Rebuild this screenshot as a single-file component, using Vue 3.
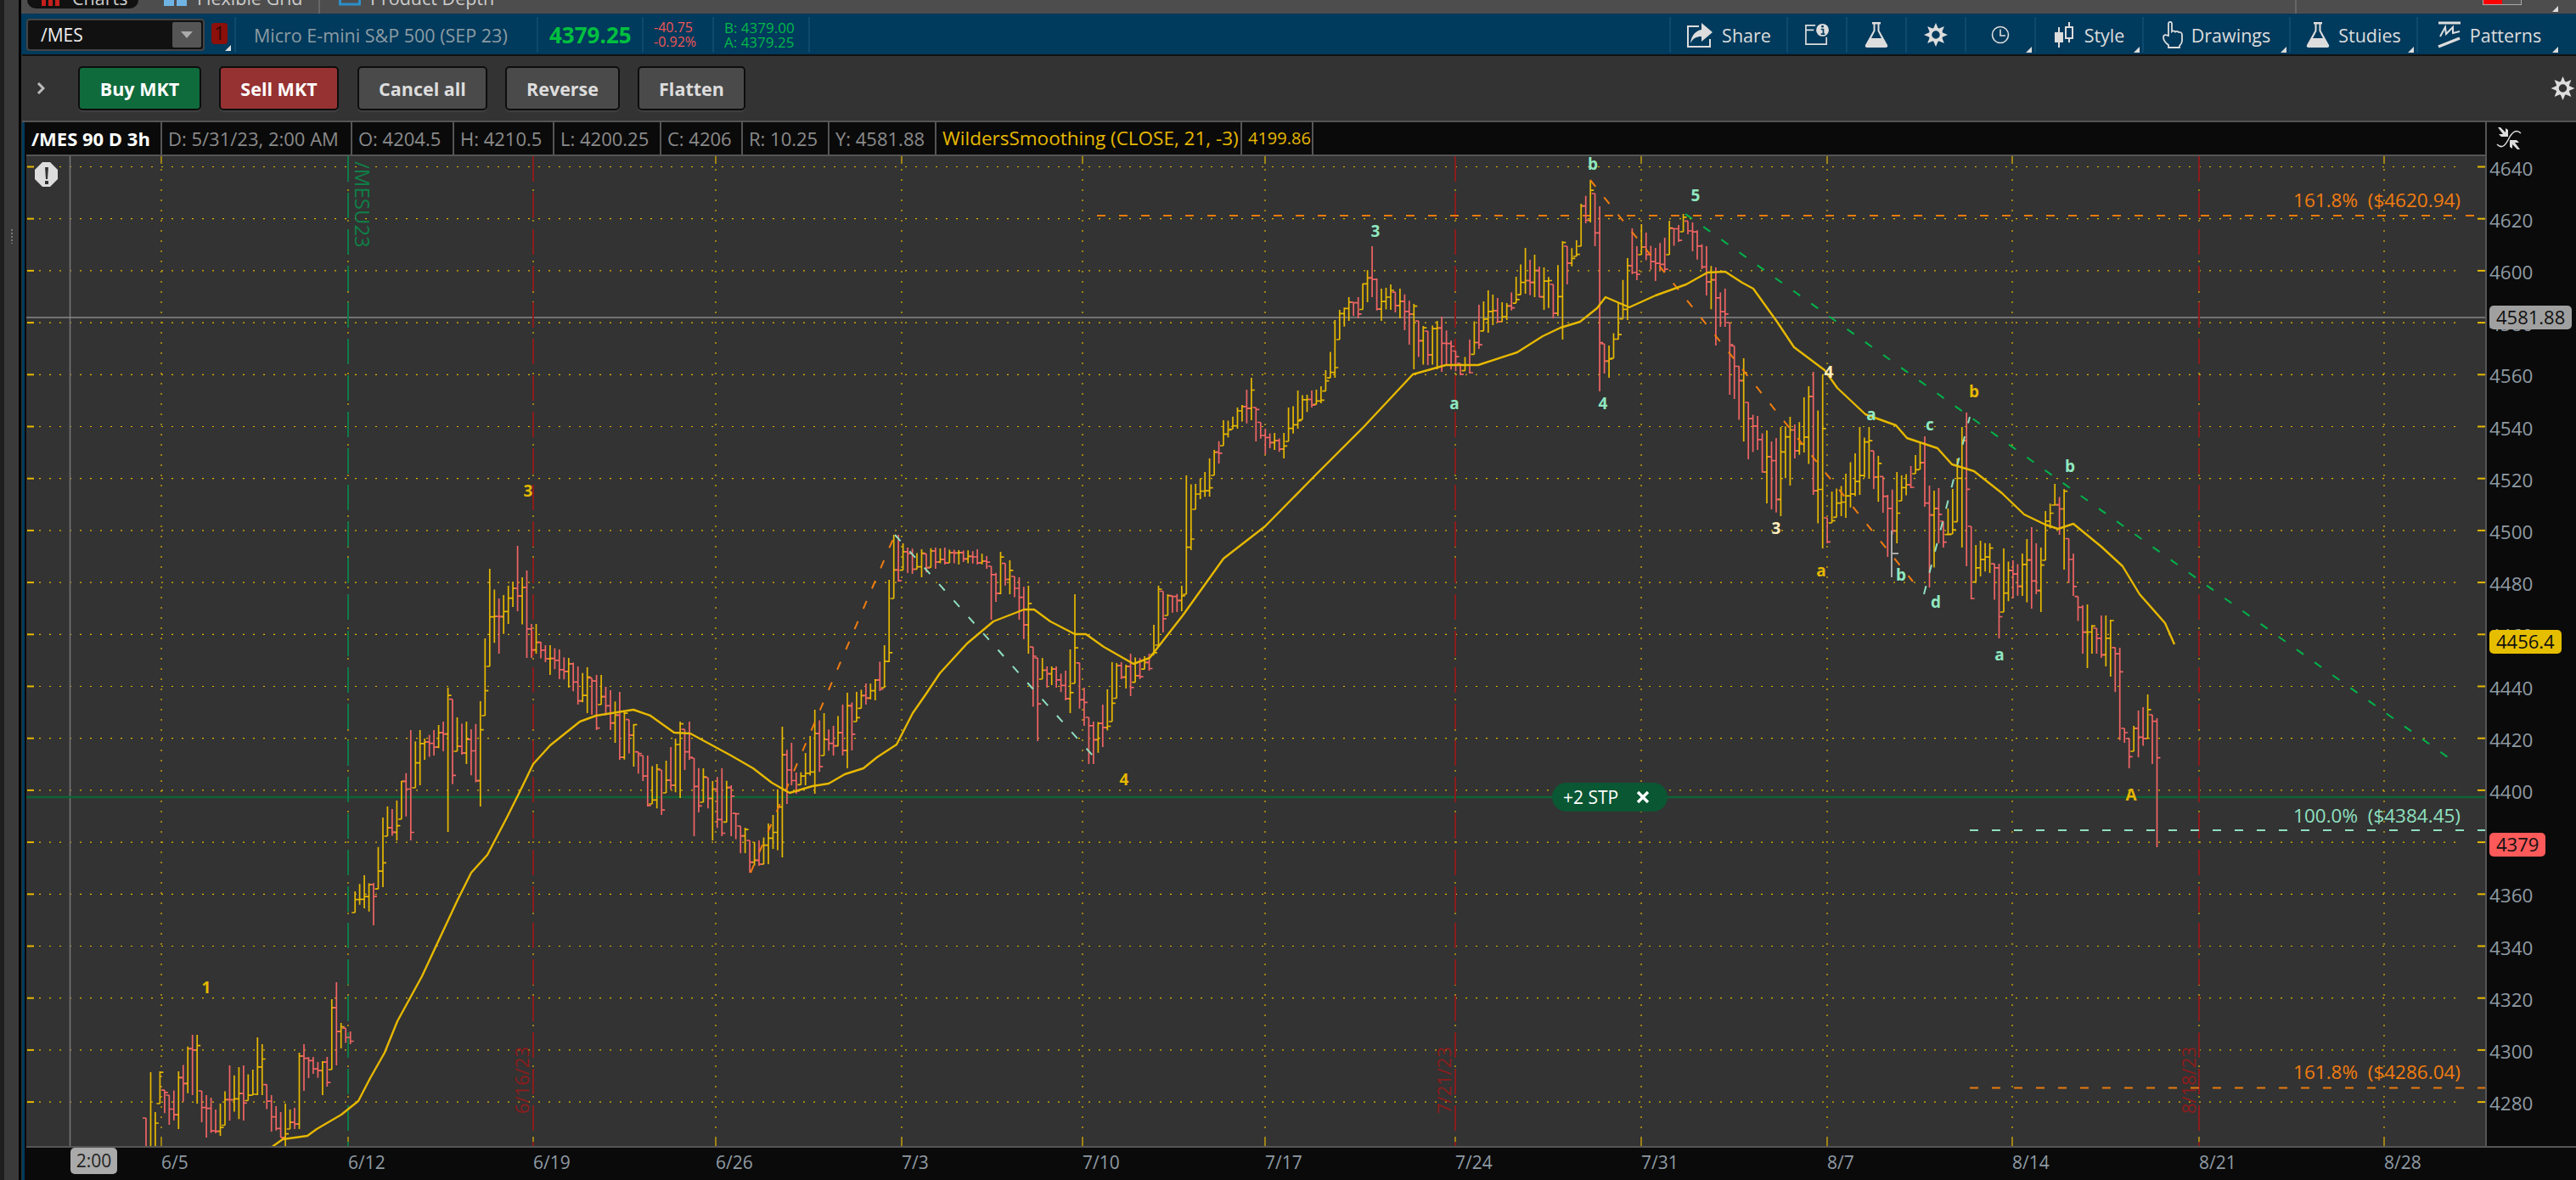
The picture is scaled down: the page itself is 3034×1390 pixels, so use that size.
<template>
  <div class="app">
    <div class="rail">
      <div class="grip"></div>
    </div>
    <div class="main">
      <!-- tab strip, cut off by the top of the shot -->
      <div class="tabs">
        <div class="tab active">
          <svg width="26" height="20" viewBox="0 0 26 20"><path d="M1 20V6h5v14zM9 20V2h5v18zM17 20V6h5v14z" fill="#c4201c" /></svg>
          <span>Charts</span>
        </div>
        <div class="tab">
          <svg width="28" height="20" viewBox="0 0 28 20"><path d="M0 0h12v20H0zM15 0h12v20H15z" fill="#6fb4e4" /></svg>
          <span>Flexible Grid</span>
        </div>
        <div class="tab last-tab">
          <svg width="26" height="20" viewBox="0 0 26 20"><rect x="1.5" y="0" width="23" height="18" fill="none" stroke="#2b8fc9" stroke-width="3" /></svg>
          <span>Product Depth</span>
        </div>
        <div class="tabs-right">
          <div class="swatch"><i></i><b></b></div>
          <span class="corner strip-corner"></span>
        </div>
      </div>

      <!-- quote bar -->
      <div class="quote">
        <div class="symbol">
          <span>/MES</span>
          <div class="drop"><i></i></div>
        </div>
        <div class="badge">1</div>
        <span class="corner sym-corner"></span>
        <div class="cell desc">Micro E-mini S&amp;P 500 (SEP 23)</div>
        <div class="cell last">4379.25</div>
        <div class="cell stack red"><span>-40.75</span><span>-0.92%</span></div>
        <div class="cell stack green"><span>B: 4379.00</span><span>A: 4379.25</span></div>
        <div class="cell spacer"></div>
        <div class="cell tool" style="width: 138px">
          <svg width="32" height="32" viewBox="0 0 32 32"><path d="M15 6H2v24h26v-9" fill="none" stroke="#ddd" stroke-width="2" /><path d="M18 2l13 11-13 11v-6c-6 0-10 2-13 8 1-9 6-15 13-16z" fill="#ddd" /></svg>
          <span>Share</span>
        </div>
        <div class="cell tool" style="width: 70px">
          <svg width="30" height="28" viewBox="0 0 32 30"><path d="M2 9h10M14 3H2v24h26v-9" fill="none" stroke="#ddd" stroke-width="1.800" /><circle cx="23" cy="9" r="8" fill="#ddd" /><path d="M21 8h3v6M21 14h5" fill="none" stroke="#003a5c" stroke-width="1.800" /><circle cx="23" cy="4.500" r="1.500" fill="#003a5c" /></svg>
        </div>
        <div class="cell tool" style="width: 70px">
          <svg width="28" height="32" viewBox="0 0 28 32"><use href="#flask" /></svg>
        </div>
        <div class="cell tool" style="width: 70px">
          <svg width="28" height="28" viewBox="0 0 28 28"><use href="#gear" /></svg>
        </div>
        <div class="cell tool" style="width: 82px">
          <svg width="22" height="22" viewBox="0 0 22 22"><circle cx="11" cy="11" r="9.500" fill="none" stroke="#ddd" stroke-width="1.600" /><path d="M11 4.500V12h6" fill="none" stroke="#ddd" stroke-width="1.600" /></svg>
          <span class="corner"></span>
        </div>
        <div class="cell tool" style="width: 127px">
          <svg width="26" height="30" viewBox="0 0 26 30"><path d="M6 6v24M18 0v24" stroke="#ddd" stroke-width="2" fill="none" /><rect x="1" y="12" width="10" height="12" fill="#ddd" /><rect x="14" y="6" width="8" height="13" fill="#003a5c" stroke="#ddd" stroke-width="2" /></svg>
          <span>Style</span>
          <span class="corner"></span>
        </div>
        <div class="cell tool" style="width: 173px">
          <svg width="24" height="32" viewBox="0 0 24 32"><path d="M7 18V3c0-3 4-3 4 0v9c1-1 3-1 4 .5 1-1 3-1 4 .5 2-.5 4 .5 4 3v7c0 3-2 5-3 6v2H7v-3c-3-2-6-6-6-9 0-3 3-4 6-1.500z" fill="none" stroke="#ddd" stroke-width="1.800" /></svg>
          <span>Drawings</span>
          <span class="corner"></span>
        </div>
        <div class="cell tool" style="width: 150px">
          <svg width="28" height="32" viewBox="0 0 28 32"><use href="#flask" /></svg>
          <span>Studies</span>
          <span class="corner"></span>
        </div>
        <div class="cell tool" style="width: 170px">
          <svg width="28" height="32" viewBox="0 0 28 32"><path d="M1 2h26" stroke="#ddd" stroke-width="3" /><path d="M3 18l6-11 1 8 8-8v7l8-2" fill="none" stroke="#ddd" stroke-width="2" /><path d="M1 30l25-10" stroke="#ddd" stroke-width="3.500" /></svg>
          <span>Patterns</span>
          <span class="corner"></span>
        </div>
      </div>

      <!-- order buttons -->
      <div class="toolbar">
        <svg class="chevron" width="10" height="14" viewBox="0 0 10 14"><path d="M2 1l6 6-6 6" fill="none" stroke="#bbb" stroke-width="3" /></svg>
        <button class="btn buy">Buy MKT</button>
        <button class="btn sell">Sell MKT</button>
        <button class="btn gray cancel">Cancel all</button>
        <button class="btn gray reverse">Reverse</button>
        <button class="btn gray flatten">Flatten</button>
        <svg class="tool-gear" width="29" height="28" viewBox="0 0 28 28"><use href="#gear" /></svg>
      </div>

      <!-- chart -->
      <div class="chart">
        <div class="head">
          <div class="h-cell title">/MES 90 D 3h</div>
          <div v-for="c in headCells" :key="c.text" class="h-cell" :style="{ width: c.w + 'px' }">{{ c.text }}</div>
          <div class="h-cell study wide" style="width: 360px">WildersSmoothing (CLOSE, 21, -3)</div>
          <div class="h-cell study small" style="width: 84px">4199.86</div>
        </div>

        <div class="axis">
          <svg class="auto" width="30" height="30" viewBox="0 0 30 30">
            <path d="M2 2h3l6 6V3l3 2v8H6l-3-3h5zM28 28h-3l-6-6v5l-3-2v-8h8l3 3h-5z" fill="#ddd" />
            <path d="M1 22c6 6 10 1 14-7s9-11 14-6" fill="none" stroke="#ddd" stroke-width="1.500" />
          </svg>
          <span v-for="p in gridPrices" :key="p" class="price" :style="{ top: priceY(p) - 156 + 'px' }">{{ p }}</span>
          <span class="tag tag-gray" style="top: 216px">4581.88</span>
          <span class="tag tag-yellow" style="top: 598px">4456.4</span>
          <span class="tag tag-red" style="top: 837px">4379</span>
        </div>

        <div class="plot">
          <svg class="canvas" width="2896" height="1166" viewBox="31 184 2896 1166">
            <defs>
              <path id="flask" d="M9 1h10v2.500h-1.500V11L27 28c.6 1.500 0 3-2 3H3c-2 0-2.600-1.500-2-3l9.500-17V3.500H9zM12.500 3.500V11.500L8 20h12l-4.500-8.500V3.500z" fill="#ddd" fill-rule="evenodd" />
              <g id="gear">
                <path v-for="a in gearAngles" :key="a" d="M11 7L14 0l3 7z" fill="#ddd" :transform="`rotate(${a} 14 14)`" />
                <circle cx="14" cy="14" r="6.500" fill="none" stroke="#ddd" stroke-width="3.500" />
              </g>
            </defs>

            <!-- grid -->
            <g stroke="#e6b800" fill="none">
              <g v-for="p in gridPrices" :key="p">
                <path :d="`M32 ${priceY(p)}H40`" stroke-width="2" />
                <path :d="`M46 ${priceY(p)}H2900`" stroke-width="1.200" stroke-dasharray="2 10" />
                <path :d="`M2918 ${priceY(p)}H2927`" stroke-width="2" />
              </g>
              <g v-for="x in gridDates" :key="x" stroke-width="1.200">
                <path :d="`M${x} 184V193M${x} 1340V1350`" />
                <path :d="`M${x} 199V1340`" stroke-dasharray="2 10" />
              </g>
            </g>

            <path d="M82.500 184V1350" stroke="#777" stroke-width="1.500" />
            <path d="M31 374H2927" stroke="#888" stroke-width="1.500" />
            <path d="M31 939H2927" stroke="#0d6338" stroke-width="2.500" />

            <path d="M410 184V1350" stroke="#0e7a48" stroke-width="2" stroke-dasharray="30 13" />
            <path v-for="x in [628, 1714, 2590]" :key="x" :d="`M${x} 184V1350`" stroke="#8c1c1c" stroke-width="2" stroke-dasharray="30 13" />

            <g font-family="'Open Sans', sans-serif" font-size="22" fill="#8c1c1c">
              <text transform="translate(623 1312) rotate(-90)">6/16/23</text>
              <text transform="translate(1709 1312) rotate(-90)">7/21/23</text>
              <text transform="translate(2586 1312) rotate(-90)">8/18/23</text>
            </g>
            <text transform="translate(418 190) rotate(90)" font-family="'Open Sans', sans-serif" font-size="24" fill="#0e8048">/MESU23</text>

            <!-- fib levels -->
            <g fill="none" stroke-width="2" stroke-dasharray="10 16">
              <path d="M1292 254H2927" stroke="#e87a0c" />
              <path d="M2320 978H2927" stroke="#8fe0c0" />
              <path d="M2320 1281.500H2927" stroke="#e87a0c" />
            </g>
            <g font-family="'Open Sans', sans-serif" font-size="22.500" text-anchor="end">
              <text x="2898" y="244" fill="#f07c10">161.8%&nbsp;&nbsp;($4620.94)</text>
              <text x="2898" y="969" fill="#8fe0c0">100.0%&nbsp;&nbsp;($4384.45)</text>
              <text x="2898" y="1271" fill="#f07c10">161.8%&nbsp;&nbsp;($4286.04)</text>
            </g>

            <!-- bars -->
            <path :d="bars.up" stroke="#e6b800" stroke-width="1.700" fill="none" />
            <path :d="bars.down" stroke="#f06464" stroke-width="1.700" fill="none" />
            <path d="M2228 625V680M2228 652H2236" stroke="#aaa" stroke-width="2" fill="none" />

            <!-- trend lines -->
            <g fill="none" stroke-width="2" stroke-dasharray="10 16">
              <path d="M1985 252L2883 892" stroke="#00b44a" />
              <path d="M1873 212L2253 685" stroke="#f07c10" />
              <path d="M884 1028L1054 630" stroke="#f07c10" />
              <path d="M1054 630L1287 890" stroke="#8fe0c0" />
              <path d="M2266 700L2320 491" stroke="#8fe0c0" />
            </g>

            <polyline :points="maPoints" fill="none" stroke="#e6b800" stroke-width="2.400" stroke-linejoin="round" />

            <!-- wave labels -->
            <g font-family="'Open Sans', sans-serif" font-size="19" font-weight="700" text-anchor="middle">
              <text v-for="m in marks" :key="m.x + m.t" :x="m.x" :y="m.y + 7" :fill="m.c">{{ m.t }}</text>
            </g>

            <!-- alert -->
            <path d="M50 191h9l9 9v11l-9 9h-9l-9-9v-11z" fill="#ddd" />
            <path d="M53 197h4l-1 14h-2zM53 213h4v4h-4z" fill="#333" />
          </svg>

          <div class="stp">
            <span>+2 STP</span>
            <svg width="16" height="16" viewBox="0 0 16 16"><path d="M2 2l12 12M14 2L2 14" stroke="#fff" stroke-width="3.400" /></svg>
          </div>
        </div>

        <div class="times">
          <span class="time-box">2:00</span>
          <span v-for="t in timeLabels" :key="t.text" class="time" :style="{ left: t.x - 31 + 'px' }">{{ t.text }}</span>
        </div>
      </div>
    </div>
  </div>
</template>

<script setup>
const priceY = (p) => 196.5 + (4640 - p) * 3.06

const gridPrices = []
for (let p = 4640; p >= 4280; p -= 20) gridPrices.push(p)

const gridDates = [190, 410, 628, 843, 1062, 1275, 1490, 1714, 1933, 2152, 2370, 2590, 2808]
const gearAngles = [0, 45, 90, 135, 180, 225, 270, 315]

const timeLabels = [
  { text: '6/5', x: 190 }, { text: '6/12', x: 410 }, { text: '6/19', x: 628 }, { text: '6/26', x: 843 },
  { text: '7/3', x: 1062 }, { text: '7/10', x: 1275 }, { text: '7/17', x: 1490 }, { text: '7/24', x: 1714 },
  { text: '7/31', x: 1933 }, { text: '8/7', x: 2152 }, { text: '8/14', x: 2370 }, { text: '8/21', x: 2590 },
  { text: '8/28', x: 2808 }
]

const headCells = [
  { text: 'D: 5/31/23, 2:00 AM', w: 224 },
  { text: 'O: 4204.5', w: 120 },
  { text: 'H: 4210.5', w: 118 },
  { text: 'L: 4200.25', w: 126 },
  { text: 'C: 4206', w: 96 },
  { text: 'R: 10.25', w: 102 },
  { text: 'Y: 4581.88', w: 126 }
]

const TEAL = '#8fe8c0'
const YELLOW = '#e6b800'
const CREAM = '#ffeebb'
const marks = [
  { x: 243, y: 1163, t: '1', c: YELLOW }, { x: 622, y: 578, t: '3', c: YELLOW },
  { x: 1324, y: 918, t: '4', c: YELLOW }, { x: 1620, y: 272, t: '3', c: TEAL },
  { x: 1713, y: 475, t: 'a', c: TEAL }, { x: 1876, y: 193, t: 'b', c: TEAL },
  { x: 1997, y: 230, t: '5', c: TEAL }, { x: 1888, y: 475, t: '4', c: TEAL },
  { x: 2154, y: 438, t: '4', c: CREAM }, { x: 2092, y: 622, t: '3', c: CREAM },
  { x: 2145, y: 672, t: 'a', c: YELLOW }, { x: 2204, y: 488, t: 'a', c: TEAL },
  { x: 2273, y: 500, t: 'c', c: TEAL }, { x: 2325, y: 461, t: 'b', c: YELLOW },
  { x: 2239, y: 677, t: 'b', c: TEAL }, { x: 2280, y: 709, t: 'd', c: TEAL },
  { x: 2438, y: 549, t: 'b', c: TEAL }, { x: 2355, y: 771, t: 'a', c: TEAL },
  { x: 2510, y: 936, t: 'A', c: YELLOW }
]

// x, top, bottom of the price range read off the chart, in page pixels
const ranges = [
  [172, 1317, 1400], [176, 1263, 1400], [185, 1310, 1360], [190, 1262, 1300], [198, 1290, 1325], [210, 1262, 1330],
  [225, 1219, 1290], [231, 1219, 1300], [235, 1285, 1322], [245, 1290, 1340], [258, 1300, 1338], [270, 1255, 1320],
  [285, 1255, 1320], [297, 1260, 1290], [303, 1222, 1290], [310, 1230, 1290], [317, 1290, 1333], [330, 1310, 1340],
  [335, 1300, 1355], [345, 1305, 1330], [352, 1240, 1330], [359, 1230, 1285], [370, 1245, 1265], [380, 1250, 1290],
  [388, 1245, 1280], [392, 1177, 1260], [396, 1157, 1255], [403, 1205, 1235], [410, 1215, 1230], [416, 1050, 1075],
  [427, 1031, 1070], [438, 1040, 1090], [450, 963, 1045], [458, 950, 985], [465, 943, 990], [475, 920, 965],
  [485, 860, 990], [492, 860, 925], [500, 870, 895], [510, 860, 890], [520, 850, 885], [530, 810, 980],
  [540, 845, 885], [550, 850, 900], [565, 826, 950], [573, 752, 843], [578, 670, 785], [585, 705, 750],
  [590, 705, 770], [598, 690, 735], [605, 685, 715], [612, 643, 720], [618, 672, 775], [625, 735, 775],
  [632, 735, 770], [640, 760, 780], [650, 760, 795], [660, 765, 800], [672, 775, 810], [680, 785, 830],
  [690, 786, 840], [700, 795, 860], [708, 795, 830], [720, 813, 860], [730, 815, 895], [745, 853, 903],
  [755, 890, 920], [765, 890, 950], [780, 907, 960], [790, 880, 930], [800, 850, 940], [810, 850, 895],
  [820, 893, 985], [830, 905, 945], [840, 920, 990], [850, 905, 985], [860, 925, 985], [870, 973, 1005],
  [878, 975, 1005], [885, 990, 1028], [895, 990, 1020], [905, 970, 1018], [912, 960, 1000], [920, 856, 1010],
  [930, 875, 925], [940, 910, 935], [950, 887, 925], [960, 836, 935], [970, 840, 890], [980, 855, 890],
  [990, 830, 890], [1000, 816, 905], [1010, 815, 850], [1020, 805, 830], [1030, 800, 825], [1040, 760, 810],
  [1045, 683, 780], [1053, 630, 705], [1058, 630, 685], [1070, 645, 675], [1085, 647, 680], [1100, 645, 670],
  [1115, 645, 665], [1130, 648, 665], [1150, 647, 665], [1160, 655, 670], [1170, 667, 730], [1180, 650, 700],
  [1190, 660, 700], [1200, 680, 730], [1210, 690, 770], [1220, 775, 873], [1225, 775, 800], [1235, 785, 810],
  [1245, 785, 810], [1255, 790, 825], [1260, 765, 840], [1265, 700, 805], [1275, 810, 855], [1283, 845, 900],
  [1289, 850, 900], [1300, 830, 880], [1310, 780, 850], [1320, 780, 800], [1330, 770, 820], [1340, 775, 800],
  [1352, 770, 790], [1365, 690, 760], [1378, 700, 725], [1390, 690, 720], [1397, 560, 700], [1410, 570, 600],
  [1422, 540, 585], [1432, 530, 560], [1441, 495, 525], [1458, 480, 505], [1475, 445, 495], [1482, 480, 520],
  [1490, 505, 535], [1500, 510, 530], [1510, 510, 540], [1520, 480, 520], [1528, 460, 505], [1545, 460, 480],
  [1558, 455, 475], [1571, 377, 445], [1580, 365, 400], [1587, 350, 378], [1600, 350, 375], [1616, 290, 350],
  [1625, 340, 378], [1637, 335, 365], [1649, 340, 375], [1664, 358, 435], [1680, 390, 430], [1693, 378, 435],
  [1700, 373, 438], [1720, 428, 442], [1732, 400, 440], [1740, 359, 411], [1755, 342, 392], [1775, 357, 377],
  [1795, 292, 346], [1805, 300, 350], [1820, 315, 365], [1830, 335, 375], [1838, 284, 400], [1845, 290, 335],
  [1855, 283, 302], [1863, 240, 290], [1871, 212, 262], [1877, 228, 290], [1883, 243, 461], [1890, 405, 440],
  [1897, 407, 445], [1905, 357, 400], [1915, 304, 377], [1920, 269, 323], [1928, 290, 330], [1935, 264, 300],
  [1950, 292, 331], [1958, 280, 320], [1965, 260, 300], [1975, 265, 285], [1985, 252, 273], [1995, 262, 296],
  [2010, 290, 348], [2020, 315, 407], [2030, 340, 385], [2040, 380, 465], [2052, 422, 520], [2060, 474, 541],
  [2068, 490, 530], [2080, 507, 593], [2088, 520, 600], [2095, 503, 608], [2107, 491, 572], [2115, 500, 540],
  [2125, 468, 533], [2135, 438, 583], [2144, 442, 646], [2152, 610, 640], [2160, 579, 616], [2175, 558, 610],
  [2190, 503, 583], [2200, 503, 564], [2215, 537, 591], [2225, 583, 656], [2233, 556, 640], [2242, 560, 590],
  [2250, 549, 575], [2260, 522, 553], [2267, 514, 597], [2275, 572, 692], [2282, 575, 640], [2290, 614, 645],
  [2300, 576, 629], [2310, 503, 645], [2315, 486, 667], [2322, 620, 706], [2335, 637, 679], [2345, 640, 675],
  [2353, 664, 752], [2362, 646, 721], [2372, 660, 705], [2380, 652, 702], [2392, 621, 717], [2400, 640, 700],
  [2405, 645, 721], [2408, 602, 660], [2420, 570, 595], [2432, 576, 671], [2440, 652, 702], [2452, 713, 770],
  [2458, 712, 787], [2468, 740, 770], [2476, 725, 775], [2480, 725, 785], [2487, 730, 797], [2495, 763, 872],
  [2503, 858, 875], [2506, 870, 905], [2512, 855, 885], [2519, 837, 892], [2528, 818, 870], [2534, 842, 900],
  [2538, 846, 998], [2545, 976, 999]
]

// fixed seed so the picture never changes between runs
let seed = 20230818
const rnd = () => {
  seed = (seed * 1664525 + 1013904223) % 4294967296
  return seed / 4294967296
}

const buildBars = () => {
  let up = ''
  let down = ''
  let prev = 1300
  const step = 5.47
  let i = 0
  for (let x = 172; x <= 2545; x += step) {
    while (i < ranges.length - 2 && ranges[i + 1][0] <= x) i++
    const [x0, t0, b0] = ranges[i]
    const [x1, t1, b1] = ranges[i + 1]
    const t = Math.min(1, (x - x0) / (x1 - x0))
    let top = t0 + (t1 - t0) * t
    let bot = b0 + (b1 - b0) * t
    const exact = Math.min(Math.abs(x - x0), Math.abs(x - x1)) < step / 2
    if (exact) {
      const r = Math.abs(x - x0) < Math.abs(x - x1) ? ranges[i] : ranges[i + 1]
      top = r[1]
      bot = r[2]
    } else {
      const h = bot - top
      top += h * rnd() * 0.25
      bot -= h * rnd() * 0.25
    }
    const open = Math.max(top, Math.min(bot, prev))
    const close = top + rnd() * (bot - top)
    prev = close
    const d = `M${x.toFixed(1)} ${top.toFixed(1)}V${bot.toFixed(1)}M${(x - 4).toFixed(1)} ${open.toFixed(1)}H${x.toFixed(1)}M${x.toFixed(1)} ${close.toFixed(1)}H${(x + 4).toFixed(1)}`
    if (close <= open) up += d
    else down += d
  }
  return { up, down }
}
const bars = buildBars()

const maPoints = [
  [319, 1352], [333, 1342], [362, 1338], [373, 1330], [402, 1313], [422, 1297], [436, 1270], [453, 1240], [468, 1203], [497, 1150],
  [539, 1060], [555, 1028], [574, 1007], [597, 963], [612, 933], [628, 900], [648, 878], [683, 850], [702, 843],
  [746, 836], [766, 843], [794, 863], [813, 864], [861, 890], [887, 905], [909, 922], [930, 934], [957, 926],
  [976, 923], [995, 912], [1017, 905], [1033, 892], [1056, 877], [1075, 840], [1091, 817], [1107, 793], [1139, 758],
  [1170, 732], [1206, 718], [1218, 718], [1237, 732], [1266, 747], [1279, 747], [1300, 762], [1335, 782], [1354, 775],
  [1393, 725], [1441, 658], [1490, 620], [1548, 561], [1606, 503], [1664, 441], [1703, 430], [1741, 430], [1787, 415],
  [1817, 396], [1838, 386], [1861, 379], [1881, 363], [1891, 350], [1919, 362], [1950, 348], [1986, 335], [2011, 321],
  [2032, 320], [2052, 333], [2065, 340], [2093, 379], [2113, 409], [2149, 436], [2164, 457], [2197, 488], [2233, 501],
  [2246, 516], [2282, 528], [2299, 547], [2325, 555], [2358, 581], [2384, 606], [2409, 618], [2424, 623], [2442, 617],
  [2475, 644], [2500, 667], [2520, 700], [2550, 734], [2561, 759]
].map((p) => p.join(',')).join(' ')
</script>

<style>
html, body { margin: 0; background: #0a0a0a; }
</style>

<style scoped>
.app {
  display: flex;
  width: 3034px;
  height: 1390px;
  overflow: hidden;
  background: #333;
  font-family: 'Open Sans', sans-serif;
  color: #ddd;
}

.rail {
  width: 25px;
  flex: none;
  box-sizing: border-box;
  background: #3a3a3a;
  border-left: 5px solid #1e1e1e;
  border-right: 3px solid #000;
  display: flex;
  justify-content: center;
  padding-top: 270px;
}
.grip {
  width: 2px;
  height: 17px;
  background: repeating-linear-gradient(#777 0 2px, transparent 2px 4px);
}

.main {
  flex: 1;
  min-width: 0;
  display: flex;
  flex-direction: column;
}

/* tabs */
.tabs {
  height: 16px;
  flex: none;
  background: #4d4d4d;
  display: flex;
  align-items: flex-end;
  overflow: hidden;
  padding-left: 7px;
}
.tab {
  height: 40px;
  width: 206px;
  display: flex;
  align-items: flex-end;
  gap: 11px;
  padding: 0 0 9px 22px;
  box-sizing: border-box;
  font-size: 21.500px;
  line-height: 24px;
  color: #ccc;
  border-right: 2px solid #666;
  white-space: nowrap;
  flex: none;
}
.tab svg { flex: none; }
.tab span { margin-bottom: -3px; }
.tab.active {
  width: 131px;
  background: #111;
  border: none;
  border-radius: 0 0 10px 10px;
  margin-right: 8px;
  margin-bottom: 6px;
  padding: 0 0 3px 16px;
}
.tab.last-tab { border-right: none; }
.tabs-right {
  margin-left: auto;
  width: 331px;
  height: 16px;
  border-left: 2px solid #666;
  box-sizing: border-box;
  position: relative;
  flex: none;
}
.swatch {
  position: absolute;
  left: 219px;
  top: 0;
  width: 44px;
  height: 5px;
  display: flex;
  border: 1px solid #aaa;
  border-top: none;
}
.swatch i { flex: 1; background: #f00; }
.swatch b { flex: 1; background: #555; }

/* little white corner marks on menu cells */
.corner {
  position: absolute;
  right: 3px;
  bottom: 0;
  width: 0;
  height: 0;
  border-left: 7px solid transparent;
  border-bottom: 7px solid #ddd;
}
.strip-corner {
  right: 21px;
  bottom: 2px;
}

/* quote bar */
.quote {
  height: 48px;
  flex: none;
  box-sizing: border-box;
  background: #003a5c;
  display: flex;
  align-items: stretch;
  position: relative;
  padding: 4px 0 0 6px;
}
.symbol {
  width: 210px;
  height: 38px;
  margin-top: 2px;
  box-sizing: border-box;
  background: #111;
  border: 2px solid #444;
  border-radius: 4px;
  display: flex;
  align-items: center;
  justify-content: space-between;
  padding: 0 2px 0 15px;
  font-size: 21px;
  color: #eee;
}
.drop {
  width: 34px;
  height: 30px;
  background: #555;
  border-radius: 2px;
  display: flex;
  align-items: center;
  justify-content: center;
}
.drop i {
  width: 0;
  height: 0;
  border-left: 7px solid transparent;
  border-right: 7px solid transparent;
  border-top: 8px solid #aaa;
}
.badge {
  width: 19px;
  height: 25px;
  margin: 7px 0 0 8px;
  background: #8b0f0a;
  border-radius: 4px;
  font-size: 21px;
  line-height: 25px;
  text-align: center;
  color: #2a0a08;
}
.sym-corner {
  right: auto;
  left: 240px;
  bottom: 4px;
}
.cell {
  box-sizing: border-box;
  border-left: 2px solid #0d4a6e;
  height: 42px;
  display: flex;
  align-items: center;
  flex: none;
  position: relative;
}
.desc {
  margin-left: 8px;
  width: 356px;
  padding-left: 21px;
  font-size: 21.500px;
  color: #8c9ba3;
}
.last {
  width: 124px;
  padding-left: 13px;
  font-size: 26px;
  font-weight: 700;
  color: #00c040;
}
.stack {
  flex-direction: column;
  align-items: flex-start;
  justify-content: center;
  font-size: 16px;
  line-height: 17px;
  padding-left: 12px;
}
.stack.red { width: 83px; color: #f25555; }
.stack.green { width: 113px; font-size: 17px; color: #00b84a; padding-left: 12px; }
.spacer { width: 1014px; }
.tool {
  justify-content: center;
  gap: 10px;
  font-size: 21.500px;
  color: #ddd;
}

/* toolbar */
.toolbar {
  height: 80px;
  flex: none;
  box-sizing: border-box;
  border-top: 2px solid #111;
  border-bottom: 2px solid #555;
  background: #333;
  display: flex;
  align-items: center;
  position: relative;
  margin-left: 1px;
  padding-left: 17px;
}
.chevron { margin-right: 39px; }
.btn {
  height: 52px;
  box-sizing: border-box;
  padding: 0;
  border: 2px solid #0d0d0d;
  border-radius: 5px;
  box-shadow: 0 2px 0 #3f3f3f;
  font: 700 21.500px 'Open Sans', sans-serif;
  color: #ddd;
}
.buy { width: 145px; background: #0f6b3c; color: #fff; }
.sell { width: 141px; margin-left: 21px; background: #963232; color: #fff; }
.gray { background: #4a4a4a; }
.cancel { width: 153px; margin-left: 22px; }
.reverse { width: 135px; margin-left: 21px; }
.flatten { width: 127px; margin-left: 21px; }
.tool-gear { margin-left: auto; margin-right: 1px; }

/* chart */
.chart {
  flex: 1;
  min-height: 0;
  display: grid;
  grid-template-columns: 2896px 1fr;
  grid-template-rows: 40px 1166px 1fr;
  margin-left: 1px;
  border-left: 3px solid #003a5c;
  background: #0a0a0a;
  padding-left: 2px;
}
.head {
  grid-column: 1;
  grid-row: 1;
  display: flex;
  background: #0a0a0a;
  border-bottom: 2px solid #555;
  box-sizing: border-box;
}
.h-cell {
  box-sizing: border-box;
  flex: none;
  border-right: 2px solid #555;
  font-size: 22px;
  line-height: 38px;
  padding-left: 7px;
  color: #8a8a8a;
  white-space: nowrap;
}
.h-cell.title {
  width: 160px;
  padding-left: 6px;
  font-weight: 700;
  color: #fff;
}
.h-cell.study { color: #e6b800; }
.h-cell.wide { font-size: 22.500px; }
.h-cell.small { font-size: 20px; }

.axis {
  grid-column: 2;
  grid-row: 1 / 3;
  position: relative;
  border-left: 2px solid #555;
  background: #0a0a0a;
}
.auto {
  position: absolute;
  left: 11px;
  top: 4px;
}
.price {
  position: absolute;
  left: 3px;
  font-size: 22.500px;
  line-height: 28px;
  color: #8f9aa3;
}
.tag {
  position: absolute;
  left: 3px;
  height: 28px;
  box-sizing: border-box;
  padding: 0 8px;
  font-size: 22px;
  line-height: 27px;
  border-radius: 5px;
  color: #111;
}
.tag-gray { background: #a0a0a0; }
.tag-yellow { background: #e6be00; }
.tag-red { background: #ff5a5a; }

.plot {
  grid-column: 1;
  grid-row: 2;
  position: relative;
}
.canvas {
  display: block;
  background: #333;
}
.stp {
  position: absolute;
  left: 1797px;
  top: 738px;
  width: 136px;
  height: 34px;
  box-sizing: border-box;
  padding-left: 13px;
  background: #0a5733;
  border-radius: 17px;
  display: flex;
  align-items: center;
  gap: 21px;
  font-size: 21px;
  color: #fff;
}

.times {
  grid-column: 1 / 3;
  grid-row: 3;
  position: relative;
  border-top: 2px solid #555;
}
.time-box {
  position: absolute;
  left: 52px;
  top: 0;
  width: 55px;
  height: 31px;
  background: #aaa;
  border-radius: 5px;
  font-size: 21px;
  line-height: 30px;
  text-align: center;
  color: #222;
}
.time {
  position: absolute;
  top: 3px;
  font-size: 21px;
  line-height: 28px;
  color: #8f9aa3;
}
</style>
